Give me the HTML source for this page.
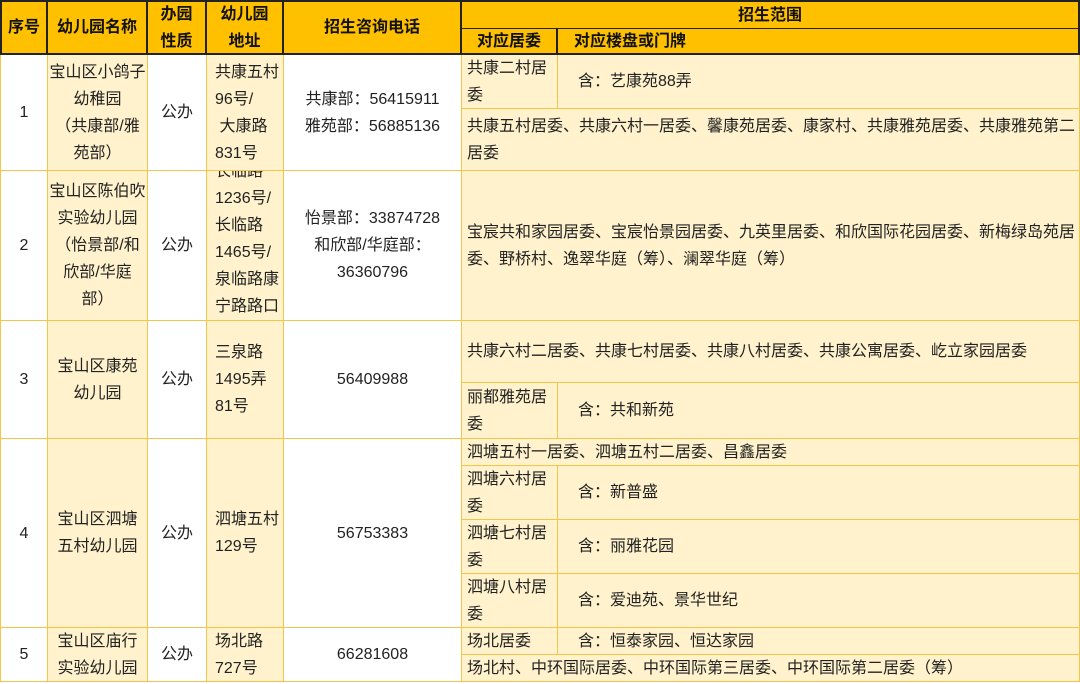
<!DOCTYPE html>
<html><head><meta charset="utf-8"><style>
body{margin:0;width:1080px;height:684px;background:#fff;position:relative;overflow:hidden;font-family:"Liberation Sans","Noto Sans CJK SC",sans-serif;font-size:16px;color:#222}
.c{position:absolute;box-sizing:border-box;display:flex;align-items:center;justify-content:center;text-align:center;line-height:27px;border-right:1.5px solid #f5c54a;border-bottom:1.5px solid #f5c54a;white-space:nowrap}
.y{background:#fff2cc}
.w{background:#fff}
.l{justify-content:flex-start;text-align:left;padding-left:5px}
.h{background:#ffc000;font-weight:bold;border-color:#222;border-right:2px solid #222;border-bottom:2px solid #222;line-height:27px;font-size:16px;color:#111}
</style></head><body>
<!-- header -->
<div class="c h" style="left:0;top:0;width:48px;height:55px;border-left:2px solid #222;border-top:2px solid #222">序号</div>
<div class="c h" style="left:48px;top:0;width:100px;height:55px;border-top:2px solid #222">幼儿园名称</div>
<div class="c h" style="left:148px;top:0;width:59px;height:55px;border-top:2px solid #222">办园<br>性质</div>
<div class="c h" style="left:207px;top:0;width:77px;height:55px;border-top:2px solid #222">幼儿园<br>地址</div>
<div class="c h" style="left:284px;top:0;width:178px;height:55px;border-top:2px solid #222">招生咨询电话</div>
<div class="c h" style="left:462px;top:0;width:618px;height:29px;border-top:2px solid #222;border-bottom-width:1.5px">招生范围</div>
<div class="c h" style="left:462px;top:29px;width:96px;height:26px">对应居委</div>
<div class="c h l" style="left:558px;top:29px;width:522px;height:26px;padding-left:16px">对应楼盘或门牌</div>

<!-- row1 -->
<div class="c w" style="left:0;top:55px;width:48px;height:116px;border-left:1.5px solid #f5c54a">1</div>
<div class="c y" style="left:48px;top:55px;width:100px;height:116px">宝山区小鸽子<br>幼稚园<br>（共康部/雅<br>苑部）</div>
<div class="c w" style="left:148px;top:55px;width:59px;height:116px">公办</div>
<div class="c y l" style="left:207px;top:55px;width:77px;height:116px;padding-left:8px">共康五村<br>96号/<br>&nbsp;大康路<br>831号</div>
<div class="c w" style="left:284px;top:55px;width:178px;height:116px">共康部：56415911<br>雅苑部：56885136</div>
<div class="c y l" style="left:462px;top:55px;width:96px;height:54px">共康二村居<br>委</div>
<div class="c y l" style="left:558px;top:55px;width:522px;height:54px;padding-left:20px">含：艺康苑88弄</div>
<div class="c y l" style="left:462px;top:109px;width:618px;height:62px">共康五村居委、共康六村一居委、馨康苑居委、康家村、共康雅苑居委、共康雅苑第二<br>居委</div>

<!-- row2 -->
<div class="c w" style="left:0;top:171px;width:48px;height:150px;border-left:1.5px solid #f5c54a">2</div>
<div class="c y" style="left:48px;top:171px;width:100px;height:150px">宝山区陈伯吹<br>实验幼儿园<br>（怡景部/和<br>欣部/华庭<br>部）</div>
<div class="c w" style="left:148px;top:171px;width:59px;height:150px">公办</div>
<div class="c y l" style="left:207px;top:171px;width:77px;height:150px;padding-left:8px;overflow:hidden;align-items:flex-start"><div style="margin-top:-13px">长临路<br>1236号/<br>长临路<br>1465号/<br>泉临路康<br>宁路路口</div></div>
<div class="c w" style="left:284px;top:171px;width:178px;height:150px">怡景部：33874728<br>和欣部/华庭部：<br>36360796</div>
<div class="c y l" style="left:462px;top:171px;width:618px;height:150px">宝宸共和家园居委、宝宸怡景园居委、九英里居委、和欣国际花园居委、新梅绿岛苑居<br>委、野桥村、逸翠华庭（筹）、澜翠华庭（筹）</div>

<!-- row3 -->
<div class="c w" style="left:0;top:321px;width:48px;height:118px;border-left:1.5px solid #f5c54a">3</div>
<div class="c y" style="left:48px;top:321px;width:100px;height:118px">宝山区康苑<br>幼儿园</div>
<div class="c w" style="left:148px;top:321px;width:59px;height:118px">公办</div>
<div class="c y l" style="left:207px;top:321px;width:77px;height:118px;padding-left:8px">三泉路<br>1495弄<br>81号</div>
<div class="c w" style="left:284px;top:321px;width:178px;height:118px">56409988</div>
<div class="c y l" style="left:462px;top:321px;width:618px;height:62px">共康六村二居委、共康七村居委、共康八村居委、共康公寓居委、屹立家园居委</div>
<div class="c y l" style="left:462px;top:383px;width:96px;height:56px">丽都雅苑居<br>委</div>
<div class="c y l" style="left:558px;top:383px;width:522px;height:56px;padding-left:20px">含：共和新苑</div>

<!-- row4 -->
<div class="c w" style="left:0;top:439px;width:48px;height:189px;border-left:1.5px solid #f5c54a">4</div>
<div class="c y" style="left:48px;top:439px;width:100px;height:189px">宝山区泗塘<br>五村幼儿园</div>
<div class="c w" style="left:148px;top:439px;width:59px;height:189px">公办</div>
<div class="c y l" style="left:207px;top:439px;width:77px;height:189px;padding-left:8px">泗塘五村<br>129号</div>
<div class="c w" style="left:284px;top:439px;width:178px;height:189px">56753383</div>
<div class="c y l" style="left:462px;top:439px;width:618px;height:27px">泗塘五村一居委、泗塘五村二居委、昌鑫居委</div>
<div class="c y l" style="left:462px;top:466px;width:96px;height:54px">泗塘六村居<br>委</div>
<div class="c y l" style="left:558px;top:466px;width:522px;height:54px;padding-left:20px">含：新普盛</div>
<div class="c y l" style="left:462px;top:520px;width:96px;height:54px">泗塘七村居<br>委</div>
<div class="c y l" style="left:558px;top:520px;width:522px;height:54px;padding-left:20px">含：丽雅花园</div>
<div class="c y l" style="left:462px;top:574px;width:96px;height:54px">泗塘八村居<br>委</div>
<div class="c y l" style="left:558px;top:574px;width:522px;height:54px;padding-left:20px">含：爱迪苑、景华世纪</div>

<!-- row5 -->
<div class="c w" style="left:0;top:628px;width:48px;height:54px;border-left:1.5px solid #f5c54a">5</div>
<div class="c y" style="left:48px;top:628px;width:100px;height:54px">宝山区庙行<br>实验幼儿园</div>
<div class="c w" style="left:148px;top:628px;width:59px;height:54px">公办</div>
<div class="c y l" style="left:207px;top:628px;width:77px;height:54px;padding-left:8px">场北路<br>727号</div>
<div class="c w" style="left:284px;top:628px;width:178px;height:54px">66281608</div>
<div class="c y l" style="left:462px;top:628px;width:96px;height:27px">场北居委</div>
<div class="c y l" style="left:558px;top:628px;width:522px;height:27px;padding-left:20px">含：恒泰家园、恒达家园</div>
<div class="c y l" style="left:462px;top:655px;width:618px;height:27px">场北村、中环国际居委、中环国际第三居委、中环国际第二居委（筹）</div>
</body></html>
